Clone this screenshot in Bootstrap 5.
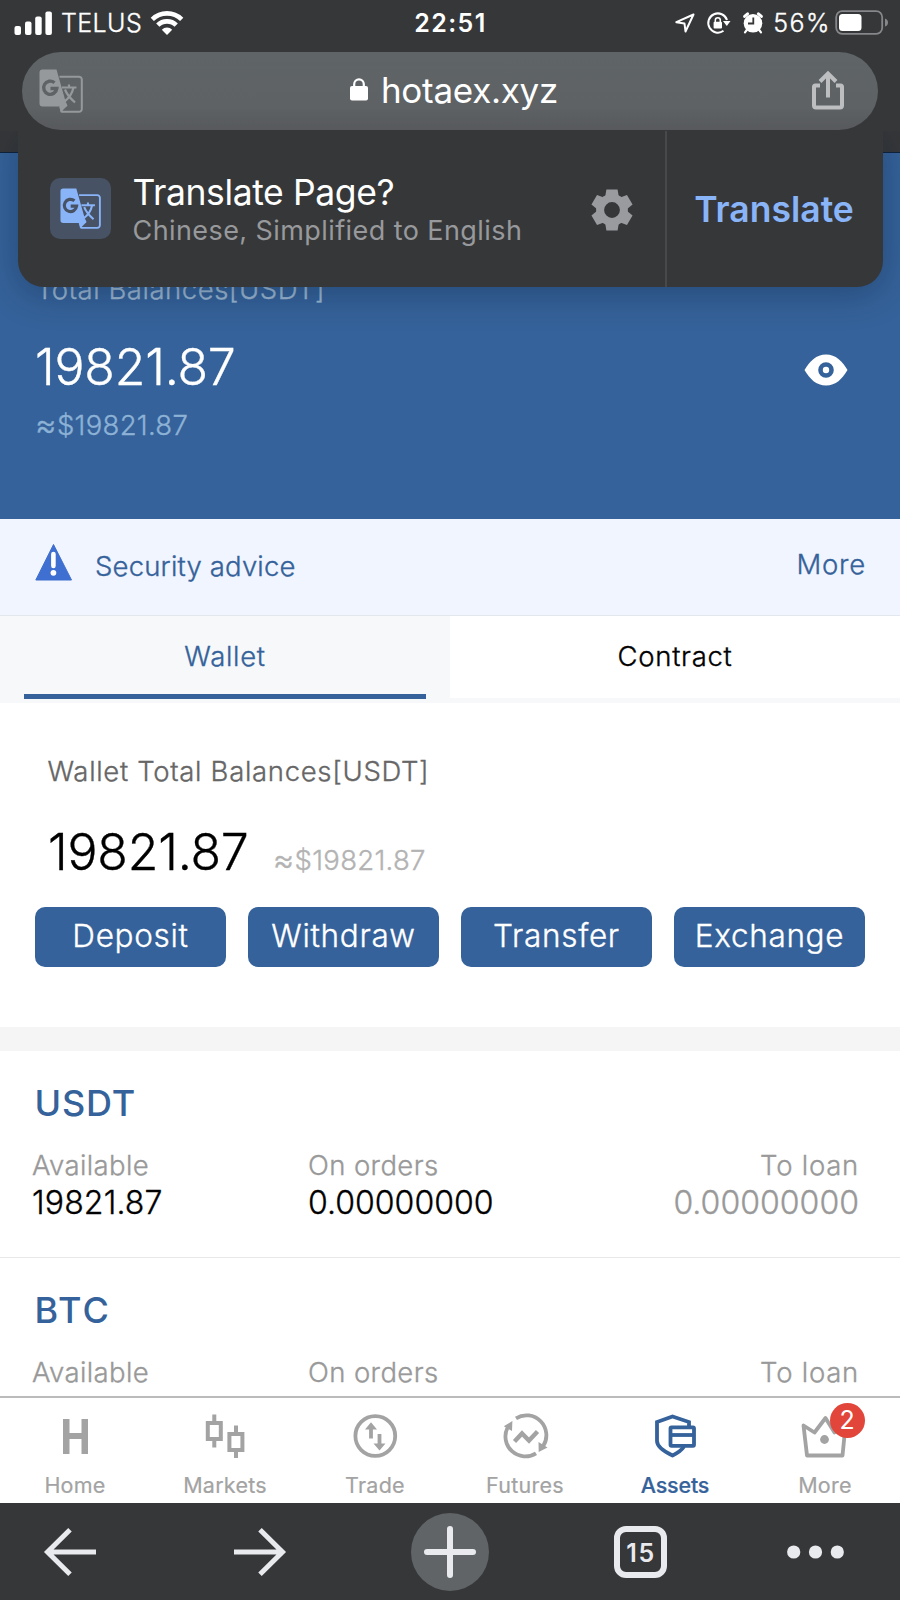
<!DOCTYPE html>
<html lang="en">
<head>
<meta charset="utf-8">
<meta name="viewport" content="width=device-width, initial-scale=1">
<title>Assets</title>
<link href="https://cdn.jsdelivr.net/npm/bootstrap@5.3.0/dist/css/bootstrap.min.css" rel="stylesheet">
<style>
:root{--brand:#35629a;--chrome:#363739;--light-ink:#e9eaed}
body{font-family:Inter,"Liberation Sans",sans-serif;color:#000;line-height:1;background:#fff}
svg{display:block;flex:none;overflow:visible}
.phone{width:900px;height:1600px}

/* browser header */
.chrome-top{height:153px;background:var(--chrome);border-bottom:1px solid #10233c;z-index:2}
.status{height:52px;padding:0 11px 6px 12px;font-size:25px;color:#fff}
.status-side{width:387px;height:46px}
.carrier,.pct,.f-sm,.big,.act-btn,.coin-v{font-weight:300;-webkit-text-stroke:.35px currentColor}
.carrier{margin-left:7px;letter-spacing:.4px}
.clock{letter-spacing:1.4px}
.rotation{margin-left:12px}
.alarm{margin-left:11px}
.pct{margin-left:9px;letter-spacing:1.5px}
.batt{margin-left:4px}
.omnibox{height:78px;margin:0 22px;padding:0 34px 0 17px;border-radius:39px;background:linear-gradient(#5f6467,#5e6265 70%,#57595c);color:#fff}
.address{margin-left:13px;padding-bottom:2px}
.lock{margin-right:13px;margin-bottom:1px}
.host{font-size:35px;letter-spacing:-.28px}
.share{margin-bottom:2px}

/* translate prompt */
.infobar{left:17.5px;top:131px;width:865px;height:156px;background:var(--chrome);border-radius:0 0 26px 26px;box-shadow:0 6px 34px rgba(10,25,50,.34);clip-path:inset(0 -17.5px -60px -17.5px)}
.infobar-main{width:649px;padding-left:32px;border-right:2px solid #48494c}
.tile{width:61px;height:61px;margin-bottom:1px;border-radius:10px;background:#475265;color:#8ab4f8}
.asktext{margin-left:22px;padding-top:5px}
.ask{font-size:35.5px;letter-spacing:-.39px;height:38px;line-height:38px;color:#fff}
.langs{font-size:27px;letter-spacing:.42px;height:38px;line-height:38px;color:#98999c}
.gear{margin-left:69px;margin-top:1px}
.act{font-size:35.5px;font-weight:600;color:#8ab4f8;padding:1px 1px 0 0}

/* page */
.f-sm{font-size:27.5px;letter-spacing:.7px}
.big{font-size:50px;letter-spacing:-.2px}
.approx{font-size:33px;line-height:0;vertical-align:-1px}
.hero{height:366px;padding:121px 52px 0 35px;background:var(--brand);color:#fff}
.hero-label{height:30px;line-height:30px;letter-spacing:.53px;color:#9db9d3;padding-left:1px}
.hero-row{height:54px;margin-top:36px}
.eye{margin-top:6px}
.hero-usd{color:#8db2d6;margin-top:15px;height:32px;line-height:32px;letter-spacing:.3px}
.advice{height:97px;padding:0 34px 0 35px;background:#f1f5ff;border-bottom:1px solid #e2e6ed;color:var(--brand)}
.warn{margin-top:24px}
.adv-text{margin-left:22px;padding-top:34px;letter-spacing:.17px}
.adv-more{padding-top:32px;letter-spacing:.75px}
.tabs-wrap{height:87px;background:#f6f8fa}
.tab{width:450px;height:82px}
.tab-on{height:87px;color:var(--brand)}
.tab-on span{height:83px;width:402px;padding-top:3px;border-bottom:5px solid var(--brand)}
.tab-off{background:#fff}
.wallet{height:324px;padding:54px 35px 0}
.wallet-label{color:#666;height:28px;line-height:28px;padding-left:12.5px;letter-spacing:.68px}
.wallet-row{margin-top:42px;height:60px;padding-left:13px}
.wallet-usd{color:#b3b3b3;margin-left:24px;letter-spacing:.3px}
.btn-row{gap:22px;margin-top:20px}
.act-btn{flex:1 1 0;height:60px;border:0;border-radius:10px;background:var(--brand);color:#fff;font-size:31.5px;letter-spacing:.68px;padding:0 0 3px;line-height:57px}
.band{height:24px;background:#f5f5f5}
.assets-list{height:345px}
.coin{height:207px;padding:32px 41px 0 32px;border-bottom:1px solid #e8e8e8}
.coin-name{font-size:36px;font-weight:500;color:var(--brand);height:40px;line-height:40px;padding-left:2.5px;letter-spacing:.8px}
.coin-grid{display:grid;grid-template-columns:276px 1fr 1fr;margin-top:26px}
.coin-k{color:#999;height:32px;line-height:32px;letter-spacing:.38px}
.coin-v{font-size:32px;height:43px;line-height:43px;letter-spacing:.03px}
.avail{letter-spacing:.15px}
.dim{color:#999}
.loan{letter-spacing:.75px}
.btc{letter-spacing:2px}

/* app tab bar */
.tabbar{height:107px;border-top:2px solid #bbb;background:#fff;z-index:1}
.tabbar a{width:150px;color:#a3a3a3;font-size:21.5px;letter-spacing:.25px;padding-top:16px;-webkit-text-stroke:.2px currentColor}
.tabbar a svg{margin-bottom:17px}
.tabbar .on{color:var(--brand);font-weight:500;letter-spacing:-.2px}
.count{right:35.5px;top:5px;width:35px;height:35px;background:#e2463a;color:#fff;font-size:25px;letter-spacing:0;-webkit-text-stroke:0}

/* browser toolbar */
.toolbar{height:97px;padding-top:1px;background:var(--chrome);color:var(--light-ink)}
.tool{flex:0 0 190.2px;height:96px}
.tool-first{margin-left:-25px}
.tool-last{flex-basis:159px}
.plus{width:78px;height:78px;background:#606467}
.count-box{width:52.5px;height:52.5px;border:6px solid var(--light-ink);border-radius:12px;font-size:25px;font-weight:600;letter-spacing:1.8px;padding:2px 0 0 1px}
</style>
</head>
<body>
<div class="phone position-relative overflow-hidden d-flex flex-column">
  <header class="chrome-top position-relative flex-shrink-0">
    <div class="status d-flex align-items-center justify-content-between">
      <div class="status-side d-flex align-items-center ps-1">
        <svg width="38" height="24" viewBox="0 0 38 24" fill="#fff"><rect x="-1.500" y="15" width="6.500" height="9" rx="2"/><rect x="9" y="10.500" width="6.500" height="13.500" rx="2"/><rect x="19.200" y="5.500" width="6.500" height="18.500" rx="2"/><rect x="29.400" y="0.500" width="6.500" height="23.500" rx="2"/></svg>
        <span class="carrier">TELUS</span>
        <svg class="ms-2" width="34" height="26" viewBox="0 0 34 26" fill="none" stroke="#fff" stroke-width="4.600"><path d="M2.300 9.400a21 21 0 0 1 29.400 0"/><path d="M7.800 15.200a13 13 0 0 1 18.400 0"/><path d="M17 25l-5.200-5.300a7.500 7.500 0 0 1 10.400 0z" fill="#fff" stroke="none"/></svg>
      </div>
      <div class="fw-semibold clock">22:51</div>
      <div class="status-side d-flex align-items-center justify-content-end">
        <svg width="20" height="20" viewBox="0 0 20 20" fill="none" stroke="#fff" stroke-width="2" stroke-linejoin="round"><path d="M18.500 1.500L1.300 9.200l8.200 1.300 1 8z"/></svg>
        <svg class="rotation" width="24" height="22" viewBox="0 0 24 22"><path d="M16.500 18.800A9.600 9.600 0 1 1 20 8" fill="none" stroke="#fff" stroke-width="2"/><path d="M16 9h7.500l-3.700 5z" fill="#fff"/><rect x="6.600" y="9.800" width="8.400" height="6.800" rx="1" fill="#fff"/><path d="M8.300 10V8.200a2.500 2.500 0 0 1 5 0V10" fill="none" stroke="#fff" stroke-width="1.500"/></svg>
        <svg class="alarm" width="22" height="22" viewBox="0 0 22 22"><circle cx="11" cy="11.300" r="9.300" fill="#fff"/><path d="M2.600 4.400l3-2.600M19.400 4.400l-3-2.600" stroke="#fff" stroke-width="3" stroke-linecap="round"/><path d="M4.800 18l-1.800 2.400M17.200 18l1.800 2.400" stroke="#fff" stroke-width="2.200" stroke-linecap="round"/><path d="M11.300 5.500v6H6" fill="none" stroke="#363739" stroke-width="1.800"/></svg>
        <span class="pct">56%</span>
        <svg class="batt" width="54" height="26" viewBox="0 0 54 26"><rect x="1.200" y="1.200" width="46" height="22.600" rx="6" fill="none" stroke="#86878a" stroke-width="1.800"/><rect x="4" y="4" width="22.500" height="17" rx="3.500" fill="#fff"/><path d="M50 8.500q3 1 3 4t-3 4z" fill="#86878a"/></svg>
      </div>
    </div>
    <div class="omnibox d-flex align-items-center justify-content-between">
      <svg width="44" height="44" viewBox="0 0 44 44" color="#96999b"><use href="#gt"/></svg>
      <div class="address d-flex align-items-center">
        <svg class="lock" width="18" height="23" viewBox="0 0 18 23"><rect y="8" width="18" height="14.500" rx="2" fill="#fff"/><path d="M4.200 9V6.200a4.800 4.800 0 0 1 9.600 0V9" fill="none" stroke="#fff" stroke-width="2.200"/></svg>
        <span class="host">hotaex.xyz</span>
      </div>
      <svg class="share" width="32" height="40" viewBox="0 0 32 40" fill="none" stroke="#bcbec0" stroke-width="4"><path d="M8 15.500H3.500a1.500 1.500 0 0 0-1.500 1.500V35.500a2 2 0 0 0 2 2H28a2 2 0 0 0 2-2V17a1.500 1.500 0 0 0-1.500-1.500H24"/><path d="M16 27.500V4M8 11.500l8-8 8 8"/></svg>
    </div>
    <div class="infobar position-absolute d-flex">
      <div class="infobar-main d-flex align-items-center">
        <div class="tile d-flex align-items-center justify-content-center"><svg width="41" height="41" viewBox="0 0 44 44"><use href="#gt"/></svg></div>
        <div class="asktext">
          <div class="ask">Translate Page?</div>
          <div class="langs">Chinese, Simplified to English</div>
        </div>
        <svg class="gear" width="42" height="42" viewBox="-21 -21 42 42" fill="#9a9b9f"><path d="M-5.600-20.500H5.600L7-12H-7z"/><path d="M-5.600-20.500H5.600L7-12H-7z" transform="rotate(60)"/><path d="M-5.600-20.500H5.600L7-12H-7z" transform="rotate(120)"/><path d="M-5.600-20.500H5.600L7-12H-7z" transform="rotate(180)"/><path d="M-5.600-20.500H5.600L7-12H-7z" transform="rotate(240)"/><path d="M-5.600-20.500H5.600L7-12H-7z" transform="rotate(300)"/><circle r="11.900" fill="none" stroke="#9a9b9f" stroke-width="8"/></svg>
      </div>
      <div class="act flex-fill d-flex align-items-center justify-content-center">Translate</div>
    </div>
  </header>

  <section class="hero flex-shrink-0">
    <div class="hero-label f-sm">Total Balances[USDT]</div>
    <div class="hero-row d-flex align-items-center justify-content-between">
      <span class="big">19821.87</span>
      <svg class="eye" width="44" height="32" viewBox="0 0 44 32"><path d="M22 0.500C32 0.500 38 7 43.500 16 38 25 32 31.500 22 31.500S6 25 .5 16C6 7 12 .5 22 .5z" fill="#fff"/><circle cx="22" cy="16" r="5.500" fill="none" stroke="#35629a" stroke-width="4.600"/></svg>
    </div>
    <div class="hero-usd f-sm"><span class="approx">≈</span>$19821.87</div>
  </section>

  <section class="advice flex-shrink-0 d-flex justify-content-between f-sm">
    <div class="d-flex">
      <svg class="warn" width="38" height="38" viewBox="0 0 38 38"><path d="M18.500 1.500L36.500 37H.8z" fill="#3f6fd0" stroke="#3f6fd0" stroke-linejoin="round"/><path d="M18.400 11v12" stroke="#fff" stroke-width="4.600" stroke-linecap="round"/><circle cx="18.400" cy="29.800" r="2.900" fill="#fff"/></svg>
      <span class="adv-text">Security advice</span>
    </div>
    <span class="adv-more">More</span>
  </section>

  <nav class="tabs-wrap flex-shrink-0 d-flex f-sm">
    <div class="tab tab-on d-flex justify-content-center"><span class="d-flex align-items-center justify-content-center">Wallet</span></div>
    <div class="tab tab-off d-flex align-items-center justify-content-center">Contract</div>
  </nav>

  <section class="wallet flex-shrink-0">
    <div class="wallet-label f-sm">Wallet Total Balances[USDT]</div>
    <div class="wallet-row d-flex align-items-baseline"><span class="big">19821.87</span><span class="wallet-usd f-sm"><span class="approx">≈</span>$19821.87</span></div>
    <div class="btn-row d-flex">
      <button class="btn act-btn">Deposit</button>
      <button class="btn act-btn">Withdraw</button>
      <button class="btn act-btn">Transfer</button>
      <button class="btn act-btn">Exchange</button>
    </div>
  </section>
  <div class="band flex-shrink-0"></div>

  <section class="assets-list overflow-hidden flex-shrink-0">
    <div class="coin">
      <div class="coin-name">USDT</div>
      <div class="coin-grid">
        <div><div class="coin-k f-sm">Available</div><div class="coin-v avail">19821.87</div></div>
        <div><div class="coin-k f-sm">On orders</div><div class="coin-v">0.00000000</div></div>
        <div class="text-end"><div class="coin-k f-sm loan">To loan</div><div class="coin-v dim">0.00000000</div></div>
      </div>
    </div>
    <div class="coin">
      <div class="coin-name btc">BTC</div>
      <div class="coin-grid">
        <div class="coin-k f-sm">Available</div>
        <div class="coin-k f-sm">On orders</div>
        <div class="coin-k f-sm loan text-end">To loan</div>
      </div>
    </div>
  </section>

  <nav class="tabbar flex-shrink-0 d-flex">
    <a class="text-decoration-none d-flex flex-column align-items-center"><svg width="44" height="44" viewBox="0 0 44 44" fill="currentColor"><path d="M10 5h6.500v14h12V5H35v35h-6.500V25h-12v15H10z"/></svg>Home</a>
    <a class="text-decoration-none d-flex flex-column align-items-center"><svg width="44" height="44" viewBox="0 0 44 44" fill="none" stroke="currentColor" stroke-width="4"><path d="M11.300.500V9M11.300 25v8.500M33 11.500V20M33 36v8"/><rect x="4.800" y="9" width="13" height="16"/><rect x="26.400" y="20" width="13" height="16"/></svg>Markets</a>
    <a class="text-decoration-none d-flex flex-column align-items-center"><svg width="44" height="44" viewBox="0 0 44 44" fill="none" stroke="currentColor" stroke-width="3.800"><circle cx="22.300" cy="22" r="19.900"/><path d="M18 24.500V13M26.500 20v11.500"/><path d="M12 15.500l6-7.300 6 7.300zM20.500 29.500l6 7 6-7z" fill="currentColor" stroke="none"/></svg>Trade</a>
    <a class="text-decoration-none d-flex flex-column align-items-center"><svg width="44" height="44" viewBox="0 0 44 44" fill="none" stroke="currentColor" stroke-width="3.800"><path d="M13 4.300A19.900 19.900 0 0 1 40.200 32M33 39.300A19.900 19.900 0 0 1 4.600 13.500"/><path d="M11.500 27.500l7.500-8 7 7 8.500-9" stroke-width="4.400"/><path d="M.8 12.200l8.600-5.200-.4 10zM44.500 33.500l-8.800 4.500-.2-10z" fill="currentColor" stroke="none"/></svg>Futures</a>
    <a class="on text-decoration-none d-flex flex-column align-items-center"><svg width="44" height="44" viewBox="0 0 44 44" fill="none" stroke="currentColor" stroke-width="3.800"><path d="M36 12V8L19.500 2.500 4 8V27c0 6 8 11 15.500 14.500 5-2.500 9-5 11.500-9"/><rect x="17.500" y="13.300" width="23.500" height="18.500" rx="1"/><path d="M17.500 21h23.500"/></svg>Assets</a>
    <a class="text-decoration-none position-relative d-flex flex-column align-items-center"><svg width="44" height="44" viewBox="0 0 44 44" fill="none" stroke="currentColor" stroke-width="3.800"><path d="M.5 11.500l11 7L22.500 4l9 14.500 11-7-3 30H4z" stroke-linejoin="round"/><circle cx="21.500" cy="25.500" r="4.400" fill="currentColor" stroke="none"/></svg>More<span class="count position-absolute rounded-circle d-flex align-items-center justify-content-center">2</span></a>
  </nav>

  <footer class="toolbar flex-shrink-0 d-flex align-items-center">
    <div class="tool tool-first d-flex align-items-center justify-content-center"><svg width="52" height="48" viewBox="0 0 52 48" fill="none" stroke="currentColor" stroke-width="5"><path d="M52 24H4M26 1.800L3.500 24 26 46.200"/></svg></div>
    <div class="tool d-flex align-items-center justify-content-center"><svg width="52" height="48" viewBox="0 0 52 48" fill="none" stroke="currentColor" stroke-width="5"><path d="M0 24H48M26 1.800L48.500 24 26 46.200"/></svg></div>
    <div class="tool d-flex align-items-center justify-content-center"><div class="plus rounded-circle d-flex align-items-center justify-content-center"><svg width="52" height="52" viewBox="0 0 52 52" stroke="currentColor" stroke-width="6" stroke-linecap="round"><path d="M26 3v46M3 26h46"/></svg></div></div>
    <div class="tool d-flex align-items-center justify-content-center"><div class="count-box d-flex align-items-center justify-content-center">15</div></div>
    <div class="tool tool-last d-flex align-items-center justify-content-center"><svg width="57" height="14" viewBox="0 0 57 14" fill="currentColor"><circle cx="6.700" cy="7" r="6.600"/><circle cx="28.500" cy="7" r="6.600"/><circle cx="50.300" cy="7" r="6.600"/></svg></div>
  </footer>

  <svg width="0" height="0" class="position-absolute">
    <symbol id="gt" viewBox="0 0 44 44">
      <mask id="gm"><rect width="44" height="44" fill="#fff"/><path d="M15.500 13.700A6.600 6.600 0 1 0 17.800 19.500H11.500" fill="none" stroke="#000" stroke-width="3.400"/></mask>
      <path d="M3.500.500H17.500L28 37.500H3.500A3 3 0 0 1 .500 34.500V3.500A3 3 0 0 1 3.500.500z" fill="currentColor" mask="url(#gm)"/>
      <path d="M20.500 7.700H40a2.800 2.800 0 0 1 2.800 2.800V40A2.800 2.800 0 0 1 40 42.800H23L21 37.500" fill="none" stroke="currentColor" stroke-width="2"/>
      <path d="M21.500 43.500l7-7-1.500-3-6.500 2z" fill="currentColor"/>
      <path d="M23 18.500H37.500M30 15.500V18.500M34.500 18.500C33 25.500 29.500 29.500 25.500 32.500M26 20.500C28 26 31.500 29.500 36 33.500" fill="none" stroke="currentColor" stroke-width="2.200"/>
    </symbol>
  </svg>
</div>
<script src="https://cdn.jsdelivr.net/npm/bootstrap@5.3.0/dist/js/bootstrap.bundle.min.js"></script>
</body>
</html>
